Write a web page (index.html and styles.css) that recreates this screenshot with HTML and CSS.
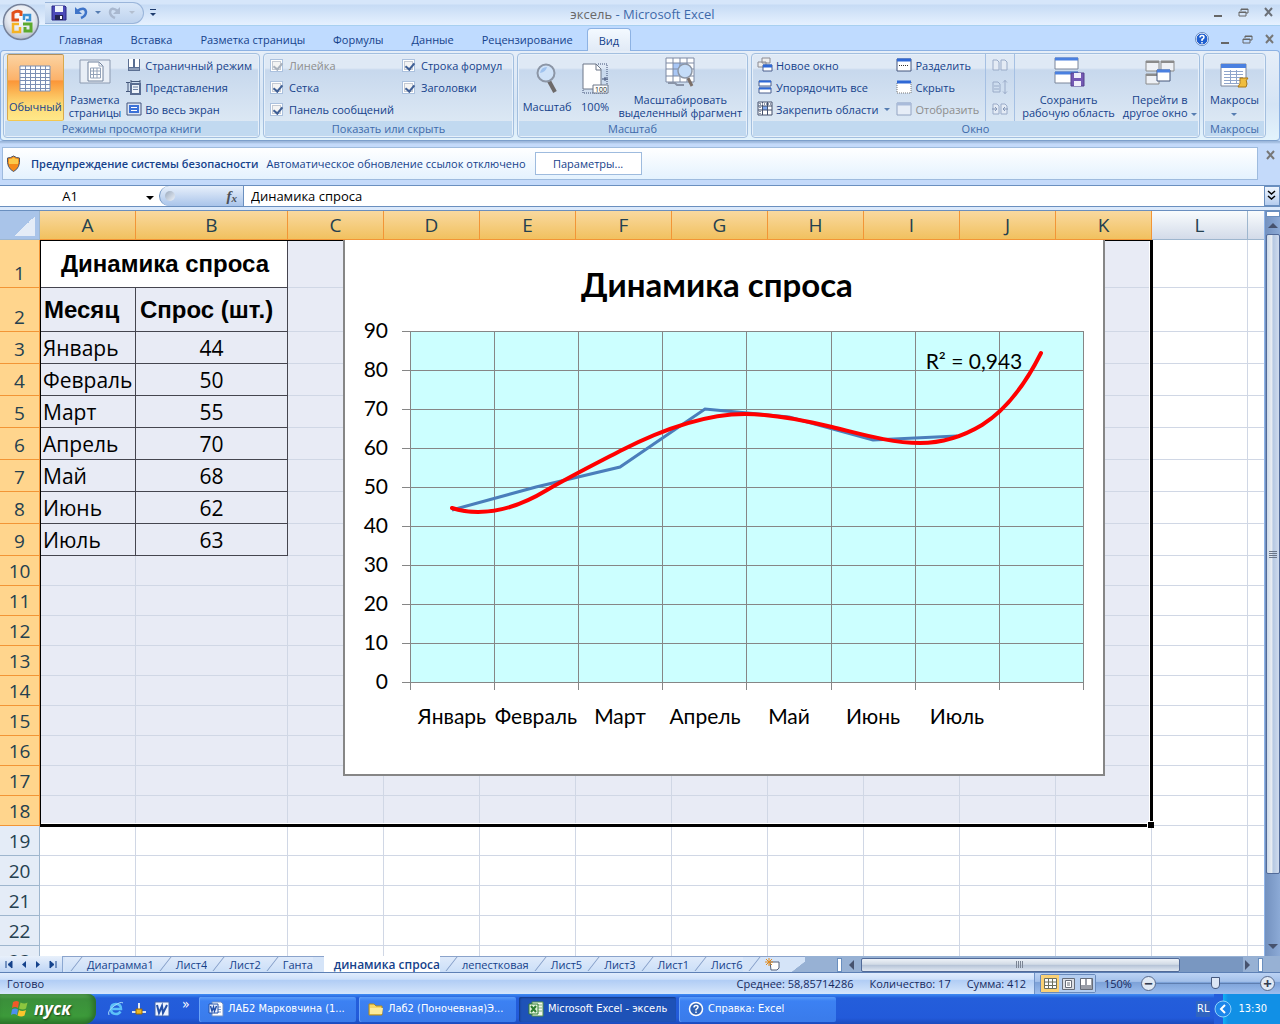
FILE: index.html
```html
<!DOCTYPE html>
<html lang="ru">
<head>
  <meta charset="UTF-8">
  <meta name="viewport" content="width=device-width, initial-scale=1.0">
  <title>эксель - Microsoft Excel</title>
  <link rel="stylesheet" href="styles.css">
</head>
<body>
  <!--title bar-->
  <header class="titlebar">
    <button class="office" aria-label="Office">
      <svg width="38" height="38" viewBox="0 0 38 38">
        <defs>
          <radialGradient id="orb" cx="50%" cy="35%" r="65%"><stop offset="0" stop-color="#fff"/><stop offset=".6" stop-color="#e4e8f0"/><stop offset="1" stop-color="#b4bccb"/></radialGradient>
        </defs>
        <circle cx="19" cy="19" r="17.5" fill="url(#orb)" stroke="#76829b" stroke-width="1.5"/>
        <g fill="none" stroke-width="3">
          <path d="M17 17h-6v-7q4-3 8-1v4" stroke="#e2501a"/>
          <path d="M22 17v-5h6v5h-4" stroke="#3b93d6" stroke-width="2.5"/>
          <path d="M17 21h-6v8h7v-5" stroke="#f5b324" stroke-width="2.5"/>
          <path d="M21 21h8v7h-6v-4" stroke="#5caa2d"/>
        </g>
      </svg>
    </button>
    <div class="quick">
      <button aria-label="Сохранить"><svg width="16" height="16" viewBox="0 0 16 16"><path d="M1 1h13l1 1v13H1z" fill="#4b49b8" stroke="#2d2a86"/><path d="M4 1h8v6H4z" fill="#eef3fb"/><path d="M4 10h8v5H4z" fill="#23234f"/><path d="M9 11h2v3H9z" fill="#fff"/></svg></button>
      <button aria-label="Отменить"><svg width="16" height="16" viewBox="0 0 16 16"><path d="M4 6q8-5 9 1 0 4-5 6" fill="none" stroke="#3f74c8" stroke-width="2.5"/><path d="M2 2v7h7z" fill="#3f74c8"/></svg></button>
      <i class="arrow"></i>
      <button aria-label="Вернуть"><svg width="16" height="16" viewBox="0 0 16 16"><path d="M11 6Q4 1 3 7q0 4 5 6" fill="none" stroke="#a9b8cf" stroke-width="2.5"/><path d="M13 2v7H6z" fill="#a9b8cf"/></svg></button>
      <i class="arrow off"></i>
    </div>
    <button class="quick-more" aria-label="Настройка панели"><i class="arrow dark"></i></button>
    <h1><span>эксель</span> - Microsoft Excel</h1>
    <div class="win">
      <button aria-label="Свернуть"><svg width="11" height="11"><path d="M1 9h8" stroke="#666" stroke-width="2"/></svg></button>
      <button aria-label="Восстановить"><svg width="11" height="11"><path d="M3 4V2h7v4H8M1 5h7v4H1zM1 5.5h7M3 2.5h7" fill="none" stroke="#666"/></svg></button>
      <button aria-label="Закрыть"><svg width="11" height="11"><path d="M2 1l7 8M9 1L2 9" stroke="#6b7078" stroke-width="2"/></svg></button>
    </div>
  </header>

  <!--ribbon tabs-->
  <nav class="tabs">
    <button>Главная</button>
    <button>Вставка</button>
    <button>Разметка страницы</button>
    <button>Формулы</button>
    <button>Данные</button>
    <button>Рецензирование</button>
    <button class="current">Вид</button>
    <div class="win">
      <button aria-label="Справка"><svg width="14" height="14" viewBox="0 0 14 14"><circle cx="7" cy="7" r="6" fill="#1f5fd0" stroke="#fff"/><circle cx="7" cy="7" r="6.6" fill="none" stroke="#5a7eb5" stroke-width=".8"/><path d="M5 5.5q0-2 2-2t2 1.700q0 1-2 2.300V9M7 10v1.500" fill="none" stroke="#fff" stroke-width="1.500"/></svg></button>
      <button aria-label="Свернуть книгу"><svg width="11" height="11"><path d="M1 9h8" stroke="#666" stroke-width="2"/></svg></button>
      <button aria-label="Восстановить книгу"><svg width="11" height="11"><path d="M3 4V2h7v4H8M1 5h7v4H1zM1 5.5h7M3 2.5h7" fill="none" stroke="#666"/></svg></button>
      <button aria-label="Закрыть книгу"><svg width="11" height="11"><path d="M2 1l7 8M9 1L2 9" stroke="#777" stroke-width="2"/></svg></button>
    </div>
  </nav>

  <!--ribbon-->
  <div class="ribbon">
    <section class="group views">
      <div class="tools">
        <button class="big pressed">
          <svg width="32" height="32" viewBox="0 0 32 32"><path d="M1 3h30v25H1z" fill="#fff"/><path d="M1 3h30v25H1zM6.500 3v25M11.500 3v25M16.500 3v25M21.500 3v25M26.500 3v25M1 6.500h30M1 10.500h30M1 14.500h30M1 17.500h30M1 21.500h30M1 25.500h30" fill="none" stroke="#7b8fb4"/></svg>
          Обычный</button>
        <button class="big">
          <svg width="32" height="32" viewBox="0 0 32 32"><path d="M1 4h30v23H1z" fill="#e8eef6" stroke="#8b99b0"/><path d="M9 6h11l4 4v15H9z" fill="#fff" stroke="#71829d"/><path d="M11.500 12h10v10h-10zM11.500 15h10M11.500 18.500h10M14.500 12v10M18 12v10M20 6v4h4" fill="none" stroke="#93a2b8"/></svg>
          Разметка<br>страницы</button>
        <div class="stack">
          <button><svg width="16" height="16" viewBox="0 0 16 16"><path d="M2 2h12v12H2z" fill="#5b6f92"/><path d="M3 2h4v8H3zM9 2h4v8H9z" fill="#fff"/><path d="M3 12h10" stroke="#c6d0e0"/></svg>Страничный режим</button>
          <button><svg width="16" height="16" viewBox="0 0 16 16"><path d="M2 3v10M0 3.500h4M0 12.500h4M5 1v3M14 1v3M5 2.500h9" stroke="#44577a" fill="none"/><path d="M5 5h9v10H5z" fill="#eef3fa" stroke="#5a6d92" stroke-width="2"/><path d="M7 8h5M7 10.500h5" stroke="#6d80a4"/></svg>Представления</button>
          <button><svg width="16" height="16" viewBox="0 0 16 16"><path d="M1 2h14v12H1z" fill="#dfe8f6" stroke="#43557c"/><path d="M3 4h10v8H3z" fill="#3c72d8"/><path d="M5 6.500h6M5 9.500h6" stroke="#fff"/></svg>Во весь экран</button>
        </div>
      </div>
      <h2>Режимы просмотра книги</h2>
    </section>

    <section class="group show">
      <div class="tools checks">
        <label class="off"><input type="checkbox" checked disabled>Линейка</label>
        <label><input type="checkbox" checked>Строка формул</label>
        <label><input type="checkbox" checked>Сетка</label>
        <label><input type="checkbox" checked>Заголовки</label>
        <label><input type="checkbox" checked>Панель сообщений</label>
      </div>
      <h2>Показать или скрыть</h2>
    </section>

    <section class="group zoom">
      <div class="tools">
        <button class="big">
          <svg width="32" height="32" viewBox="0 0 32 32"><path d="M18 18l6 11" stroke="#6d6a6a" stroke-width="4"/><circle cx="15" cy="10" r="8.500" fill="#cfe2f8" stroke="#8c96a6" stroke-width="2"/><path d="M9 10q1-6 7-6-1 5-7 6z" fill="#9fc2ee"/></svg>
          Масштаб</button>
        <button class="big">
          <svg width="32" height="32" viewBox="0 0 32 32"><path d="M4 1h13l5 5v20H4z" fill="#fff" stroke="#6c7788"/><path d="M17 1v6h5" fill="none" stroke="#6c7788"/><path d="M19 1h9v29H4v-3" fill="none" stroke="#3e4f74" stroke-dasharray="1 1"/><path d="M23 16h6M26 14v4" stroke="#3e4f74"/><path d="M14 22h15v8H14z" fill="#fff" stroke="#6c7788"/><text x="16" y="29" font-size="7" fill="#222">100</text></svg>
          100%</button>
        <button class="big">
          <svg width="32" height="32" viewBox="0 0 32 32"><path d="M2 2h28v24H2z" fill="#fff"/><path d="M9 7h14v13H9z" fill="#a9c7f5"/><path d="M2 2h28v24H2zM9 2v24M16 2v24M23 2v24M2 7h28M2 13h28M2 20h28" fill="none" stroke="#7d89a3"/><path d="M4 27h7l2 2h7" fill="none" stroke="#8a94a8" stroke-width="2"/><path d="M24 22l4 8" stroke="#7c6f68" stroke-width="3"/><circle cx="21" cy="15" r="7" fill="#c4dcf8" stroke="#8c96a6" stroke-width="1.500"/></svg>
          Масштабировать<br>выделенный фрагмент</button>
      </div>
      <h2>Масштаб</h2>
    </section>

    <section class="group window">
      <div class="tools">
        <div class="stack">
          <button><svg width="16" height="16" viewBox="0 0 16 16"><path d="M5 1h8v5H5zM1 5h8v5H1z" fill="#eee" stroke="#8a8a92"/><path d="M6 8h9v6H6z" fill="#fff" stroke="#4a5f8d"/><path d="M6 9h9" stroke="#2f68d6" stroke-width="3"/></svg>Новое окно</button>
          <button><svg width="16" height="16" viewBox="0 0 16 16"><path d="M2 2h12v5H2zM2 9h12v5H2z" fill="#fff" stroke="#4a5f8d"/><path d="M2 2.500h12M2 9.500h12" stroke="#2f68d6" stroke-width="2"/></svg>Упорядочить все</button>
          <button><svg width="16" height="16" viewBox="0 0 16 16"><path d="M1 1h14v13H1z" fill="#fff"/><path d="M6 5h5v4H6z" fill="#7fa8ee"/><path d="M1 1h14v13H1zM1 5h14M5.500 1v13M10.500 1v13M1 9h14" fill="none" stroke="#44516d"/><path d="M3 2v12M1 3h13" stroke="#8d97ab" stroke-dasharray="1 1" stroke-width="2"/></svg>Закрепить области<i class="arrow"></i></button>
        </div>
        <div class="stack">
          <button><svg width="16" height="16" viewBox="0 0 16 16"><path d="M1 2h14v12H1z" fill="#fff" stroke="#43557c"/><path d="M1 3h14" stroke="#2f68d6" stroke-width="3"/><path d="M3 8.500h10" stroke="#333" stroke-dasharray="1 1"/></svg>Разделить</button>
          <button><svg width="16" height="16" viewBox="0 0 16 16"><path d="M1 3h14v11H1z" fill="#fff" stroke="#777" stroke-dasharray="1 1"/><path d="M1 3h14" stroke="#2f68d6" stroke-width="3"/></svg>Скрыть</button>
          <button disabled><svg width="16" height="16" viewBox="0 0 16 16"><path d="M1 2h14v12H1z" fill="#e6edf7" stroke="#93a4c2"/><path d="M1 3h14" stroke="#a9bbda" stroke-width="3"/></svg>Отобразить</button>
        </div>
        <div class="stack pair">
          <button disabled aria-label="Рядом"><svg width="18" height="16" viewBox="0 0 18 16"><path d="M2 3h4l2 2v8H2zM10 3h4l2 2v8h-6z" fill="#e4ebf5" stroke="#9aabc8"/></svg></button>
          <button disabled aria-label="Синхронная прокрутка"><svg width="18" height="16" viewBox="0 0 18 16"><path d="M2 3h5l2 2v8H2zM3 7h5M3 10h5M14 1v14M12 3.500l2-2 2 2M12 12.500l2 2 2-2" fill="none" stroke="#9aabc8"/></svg></button>
          <button disabled aria-label="Восстановить расположение"><svg width="18" height="16" viewBox="0 0 18 16"><path d="M2 3h4l2 2v8H2zM10 3h4l2 2v8h-6z" fill="#e4ebf5" stroke="#9aabc8"/><path d="M1 8h5M4 6l2 2-2 2M17 8h-5M14 6l-2 2 2 2" fill="none" stroke="#8496b6"/></svg></button>
        </div>
        <button class="big">
          <svg width="32" height="32" viewBox="0 0 32 32"><path d="M2 2h23v11H2zM2 16h23v11H2z" fill="#fff" stroke="#7b859a"/><path d="M2 3h23M2 17h23" stroke="#4a80e0" stroke-width="3"/><path d="M18 17h13v13H18z" fill="#7459b4" stroke="#54408c"/><path d="M21 17h7v5h-7zM21 25h7v5h-7z" fill="#f0eefa"/></svg>
          Сохранить<br>рабочую область</button>
        <button class="big">
          <svg width="32" height="32" viewBox="0 0 32 32"><path d="M2 5h13v10H2zM17 5h13v10H17zM2 18h13v10H2z" fill="#eef1f6" stroke="#8b8b8b"/><path d="M2 6h13M17 6h13M2 19h13" stroke="#8b8b8b" stroke-width="2"/><path d="M13 14h13v11H13z" fill="#fff" stroke="#44577a"/><path d="M13 15h13" stroke="#4a80e0" stroke-width="3"/></svg>
          Перейти в<br>другое окно<i class="arrow"></i></button>
      </div>
      <h2>Окно</h2>
    </section>

    <section class="group macros">
      <div class="tools">
        <button class="big">
          <svg width="32" height="32" viewBox="0 0 32 32"><path d="M3 8h25v22H3z" fill="#fff" stroke="#7b859a"/><path d="M3 10h25" stroke="#4a80e0" stroke-width="4"/><path d="M6 15.500h19M6 18.500h19M6 21.500h19M6 24.500h19M6 27.500h15M12.500 14v14M18.500 14v14" stroke="#8fa5cb"/><path d="M22 22h8q-3 2-1 6l-1 3h-8q3-3 2-9z" fill="#efbd3e" stroke="#a97714"/></svg>
          Макросы<br><i class="arrow"></i></button>
      </div>
      <h2>Макросы</h2>
    </section>
  </div>

  <!--security warning-->
  <div class="warning">
    <div class="warning-box">
      <svg width="15" height="18" viewBox="0 0 15 18"><path d="M7.500 1q3 2 6 2 1 10-6 13.500Q.5 13 1.500 3q3 0 6-2z" fill="#f58a1a" stroke="#4c5566"/><path d="M7.500 2.500q3 2 4.500 1.500v5H3V4q2 .5 4.500-1.500z" fill="#fbc94a"/></svg>
      <strong>Предупреждение системы безопасности</strong>
      <span>Автоматическое обновление ссылок отключено</span>
      <button>Параметры...</button>
    </div>
    <button class="close" aria-label="Закрыть"><svg width="11" height="11"><path d="M2 1l7 8M9 1L2 9" stroke="#777" stroke-width="2"/></svg></button>
  </div>

  <!--formula bar-->
  <div class="formula">
    <input class="name" value="A1" aria-label="Имя">
    <button class="name-list" aria-label="Список имён"><i class="arrow black"></i></button>
    <div class="fx"><i class="knob"></i><button aria-label="Вставить функцию"><em>f<sub>x</sub></em></button></div>
    <input class="value" value="Динамика спроса" aria-label="Строка формул">
    <button class="expand" aria-label="Развернуть"><svg width="9" height="12" viewBox="0 0 9 12"><path d="M1 1l3.500 3L8 1M1 6l3.500 3L8 6" fill="none" stroke="#000" stroke-width="1.500"/></svg></button>
  </div>

  <!--sheet-->
  <main class="sheet">
    <div class="cells">
      <table>
        <colgroup><col class="c-head"><col class="c-std"><col class="c-wide"><col class="c-std"><col class="c-std"><col class="c-std"><col class="c-std"><col class="c-std"><col class="c-std"><col class="c-std"><col class="c-std"><col class="c-std"><col class="c-std"><col class="c-std"></colgroup>
        <thead>
          <tr><th class="corner"></th><th>A</th><th>B</th><th>C</th><th>D</th><th>E</th><th>F</th><th>G</th><th>H</th><th>I</th><th>J</th><th>K</th><th class="plain">L</th><th class="plain"></th></tr>
        </thead>
        <tbody>
          <tr class="r-title"><th>1</th><td class="box active-cell" colspan="2">Динамика спроса</td></tr>
          <tr class="r-names"><th>2</th><td class="box">Месяц</td><td class="box">Спрос (шт.)</td></tr>
          <tr class="r-data"><th>3</th><td class="box">Январь</td><td class="box num">44</td></tr>
          <tr class="r-data"><th>4</th><td class="box">Февраль</td><td class="box num">50</td></tr>
          <tr class="r-data"><th>5</th><td class="box">Март</td><td class="box num">55</td></tr>
          <tr class="r-data"><th>6</th><td class="box">Апрель</td><td class="box num">70</td></tr>
          <tr class="r-data"><th>7</th><td class="box">Май</td><td class="box num">68</td></tr>
          <tr class="r-data"><th>8</th><td class="box">Июнь</td><td class="box num">62</td></tr>
          <tr class="r-data"><th>9</th><td class="box">Июль</td><td class="box num">63</td></tr>
        </tbody>
      </table>
      <div class="selection"></div>

      <!--chart-->
      <svg class="chart" width="762" height="536" viewBox="0 0 762 536">
        <path d="M0 0h762v536H0z" fill="#fff"/>
        <path d="M1 0v535h760V0" fill="none" stroke="#868686" stroke-width="2"/>
        <path d="M67 91h673v351H67z" fill="#ccffff"/>
        <path class="grid" d="M59 91.500h682M59 130.500h682M59 169.500h682M59 208.500h682M59 247.500h682M59 286.500h682M59 325.500h682M59 364.500h682M59 403.500h682M59 442.500h682"/>
        <path class="grid" d="M67.500 91v359M151.500 91v359M235.500 91v359M319.500 91v359M403.500 91v359M488.500 91v359M572.500 91v359M656.500 91v359M740.500 91v359"/>
        <polyline points="109,270 193,247 277,227 362,169 446,177 530,200 614,196" fill="none" stroke="#4a7ebb" stroke-width="3"/>
        <path d="M109 268C118 271 126 272 135 272C158 272 181 264 204 250C228 236 252 224 277 211C318 190 360 174 402 174C431 174 460 180 489 187C518 194 548 203 577 203C598 203 619 197 639 185C663 170 682 145 698 113" fill="none" stroke="#f00" stroke-width="4" stroke-linecap="round"/>
        <text class="chart-title" x="374" y="57">Динамика спроса</text>
        <g class="y-axis">
          <text x="45" y="98">90</text><text x="45" y="137">80</text><text x="45" y="176">70</text><text x="45" y="215">60</text><text x="45" y="254">50</text>
          <text x="45" y="293">40</text><text x="45" y="332">30</text><text x="45" y="371">20</text><text x="45" y="410">10</text><text x="45" y="449">0</text>
        </g>
        <g class="x-axis">
          <text x="109" y="484">Январь</text><text x="193" y="484">Февраль</text><text x="277" y="484">Март</text><text x="362" y="484">Апрель</text>
          <text x="446" y="484">Май</text><text x="530" y="484">Июнь</text><text x="614" y="484">Июль</text>
          <text x="631" y="129">R² = 0,943</text>
        </g>
      </svg>
    </div>
    <div class="vscroll">
      <i class="split"></i>
      <button class="up" aria-label="Вверх"></button>
      <div class="thumb"></div>
      <button class="down" aria-label="Вниз"></button>
    </div>
  </main>

  <!--sheet tabs-->
  <div class="bottom">
    <div class="nav">
      <button aria-label="Первый лист"><svg width="8" height="9"><path d="M1 1v7M7 1v7L3 4.500z" stroke="#15428b" fill="#15428b"/></svg></button>
      <button aria-label="Назад"><svg width="8" height="9"><path d="M6 1v7L2 4.500z" fill="#15428b"/></svg></button>
      <button aria-label="Вперёд"><svg width="8" height="9"><path d="M2 1v7L6 4.500z" fill="#15428b"/></svg></button>
      <button aria-label="Последний лист"><svg width="8" height="9"><path d="M7 1v7M1 1v7l4-3.500z" stroke="#15428b" fill="#15428b"/></svg></button>
    </div>
    <div class="sheets">
      <button>Диаграмма1</button>
      <button>Лист4</button>
      <button>Лист2</button>
      <button>Ганта</button>
      <button class="current">динамика спроса</button>
      <button>лепестковая</button>
      <button>Лист5</button>
      <button>Лист3</button>
      <button>Лист1</button>
      <button>Лист6</button>
      <button class="add" aria-label="Вставить лист"><svg width="16" height="13" viewBox="0 0 16 13"><path d="M5 4h9v6l-2 2H6z" fill="#fff" stroke="#55617a"/><path d="M4 0v8M0 4h8M1 1l6 6M7 1L1 7" stroke="#e08a1c"/></svg></button>
    </div>
    <div class="hscroll">
      <i class="split"></i>
      <button class="left" aria-label="Влево"></button>
      <div class="thumb"></div>
      <span class="track"></span>
      <button class="right" aria-label="Вправо"></button>
      <i class="split"></i>
    </div>
  </div>

  <!--status bar-->
  <footer class="status">
    <span class="ready">Готово</span>
    <span>Среднее: 58,85714286</span>
    <span>Количество: 17</span>
    <span>Сумма: 412</span>
    <div class="zoombar">
      <div class="modes">
        <button class="on" aria-label="Обычный"><svg width="13" height="11"><path d="M.5.5h12v10H.5z" fill="#fff"/><path d="M.5.5h12v10H.5zM4.500 0v11M8.500 0v11M0 4h13M0 7.500h13" fill="none" stroke="#6d6f5c"/></svg></button>
        <button aria-label="Разметка страницы"><svg width="13" height="12"><path d="M.5.5h12v11H.5z" fill="#dcdfe5" stroke="#666c78"/><path d="M3.500 2.500h6v7h-6zM5 5h3M5 7h3" fill="#fff" stroke="#666c78"/></svg></button>
        <button aria-label="Страничный режим"><svg width="13" height="12"><path d="M.5.5h12v11H.5z" fill="#9a9ea8" stroke="#666c78"/><path d="M1 1h4v6H1zM7 1h4v6H7z" fill="#fff"/></svg></button>
      </div>
      <span>150%</span>
      <button class="round" aria-label="Уменьшить">−</button>
      <input type="range" min="0" max="100" value="58" aria-label="Масштаб">
      <button class="round" aria-label="Увеличить">+</button>
    </div>
  </footer>

  <!--taskbar-->
  <div class="taskbar">
    <button class="start"><svg width="20" height="18" viewBox="0 0 20 18"><path d="M3 2q4-2 6 0L8 8Q5 6 2 8z" fill="#f0592a"/><path d="M10.500 2.500q4 2 7 0l-1.500 6q-3 2-7 0z" fill="#8cc63f"/><path d="M2 9.500q3-2 6 0L7 15q-3-2-6 0z" fill="#4d8ff0"/><path d="M9 10q3 2 7 0l-1.500 5.500q-3 2-7 0z" fill="#fbc52c"/></svg>пуск</button>
    <div class="launch">
      <button aria-label="Internet Explorer"><svg width="16" height="16" viewBox="0 0 16 16"><path d="M4 8h9q0-5-5-5T3 8t5 5q3 0 4.500-2.500" fill="none" stroke="#5cc0f8" stroke-width="2.500"/><path d="M1 14Q-1 10 6 5t9-3" fill="none" stroke="#a5dcfb"/></svg></button>
      <button aria-label="Сеть"><svg width="16" height="16" viewBox="0 0 16 16"><path d="M7 2h2v7H7z" fill="#dfe8f5"/><path d="M1 11h14" stroke="#dbe3ee" stroke-width="2"/><path d="M5 8h6v5H5z" fill="#f0b823" stroke="#94680b"/></svg></button>
      <button aria-label="Word"><svg width="16" height="16" viewBox="0 0 16 16"><path d="M1 1h14v14H1z" fill="#eef4ff" stroke="#3a62b0"/><path d="M3 4l2 8 3-7 1 7 4-8" fill="none" stroke="#2350a8" stroke-width="2"/></svg></button>
    </div>
    <span class="more">»</span>
    <div class="tasks">
      <button><svg width="16" height="16" viewBox="0 0 16 16"><path d="M4 1h9l2 2v12H4z" fill="#fff" stroke="#6f8fc4"/><path d="M8 6h5M9 8.500h4M8 11h5" stroke="#7d99cc"/><path d="M1 3h9v9H1z" fill="#e9f0ff" stroke="#2350a8"/><path d="M2.500 5l1.500 5 1.500-4 1 4L8.500 5" fill="none" stroke="#2350a8" stroke-width="1.500"/></svg>ЛАБ2 Марковчина (1...</button>
      <button><svg width="16" height="16" viewBox="0 0 16 16"><path d="M1 3h5l2 2h6v9H1z" fill="#f8d767" stroke="#b18a1c"/><path d="M2 7h13l-1 6H2z" fill="#fdeb9b"/></svg>Лаб2 (Поночевная)Э...</button>
      <button class="on"><svg width="16" height="16" viewBox="0 0 16 16"><path d="M4 1h11v14H4z" fill="#eff7ec" stroke="#4e8f4a"/><path d="M10 4h4M10 7h4M10 10h4" stroke="#83b67b"/><path d="M1 3h9v10H1z" fill="#e3f3dc" stroke="#2e7d32"/><path d="M3 5l5 6M8 5l-5 6" stroke="#2e7d32" stroke-width="2"/></svg>Microsoft Excel - эксель</button>
      <button><svg width="16" height="16" viewBox="0 0 16 16"><circle cx="8" cy="8" r="6.500" fill="#2f62b5" stroke="#fff" stroke-width="1.500"/><path d="M6 6.500q0-2 2-2t2 1.500q0 1-2 2.500V9.500M8 10.500V12" fill="none" stroke="#fff" stroke-width="1.500"/></svg>Справка: Excel</button>
    </div>
    <span class="lang">RL</span>
    <div class="tray">
      <button aria-label="Показать значки"><svg width="18" height="18" viewBox="0 0 18 18"><circle cx="9" cy="9" r="8" fill="#1d86ea" stroke="#8fd0fb"/><path d="M11 5L7 9l4 4" fill="none" stroke="#fff" stroke-width="2"/></svg></button>
      <time>13:30</time>
    </div>
  </div>

  <script>
    const tbody = document.querySelector(".sheet tbody");
    const lastRow = 23; //last row that is visible
    const cols = 13;
    const selectedRows = 18;
    const selectedCols = 11;

    //add the empty rows
    for(let i = tbody.rows.length + 1; i <= lastRow; i++){
      const row = tbody.insertRow();
      const head = document.createElement("th");
      head.textContent = i;
      row.append(head);
    }

    //fill every row with empty cells and mark the selected ones
    [...tbody.rows].forEach((row, r) => {
      const inRow = r < selectedRows;
      if(!inRow) row.cells[0].classList.add("plain");
      let used = 0;
      [...row.cells].slice(1).forEach(cell => {
        used += cell.colSpan;
        cell.classList.add("selected");
      });
      for(; used < cols; used++){
        const cell = row.insertCell();
        if(inRow && used < selectedCols) cell.classList.add("selected");
      }
    });
  </script>
</body>
</html>
```
FILE: styles.css
```css
*{box-sizing:border-box;}
body{
  margin:0;
  height:100vh;
  display:flex;
  flex-direction:column;
  overflow:hidden;
  background:#bfdbff;
  color:#15428b;
  font:11px/13px "Open Sans","Noto Sans",sans-serif;
}
button{
  font:inherit;
  color:inherit;
  background:none;
  border:0;
  padding:0;
  margin:0;
  white-space:nowrap;
}
svg{display:block; flex:none;}
h1,h2{margin:0; font-weight:normal;}

/*small drop-down arrow*/
.arrow{
  display:inline-block;
  border:3px solid transparent;
  border-top-color:#567db1;
  border-bottom:0;
  vertical-align:middle;
}
.arrow.off{border-top-color:#b3bfd0;}
.arrow.dark{border-top-color:#1e3c6e;}
.arrow.black{border-top-color:#000; border-width:4px 4px 0;}

/*title bar*/
.titlebar{
  flex:none;
  display:flex;
  align-items:center;
  position:relative;
  height:26px;
  padding:0 6px 0 2px;
  background:linear-gradient(#d6e6fa 0 4px,#c6dbf5 5px,#e6f1ff 25px);
  border-bottom:1px solid #a8d0f0;
}
.office{align-self:flex-start; width:38px; z-index:2; margin-top:3px;}
.quick{
  display:flex;
  align-items:center;
  gap:6px;
  height:22px;
  margin-left:5px;
  padding:0 8px 0 6px;
  background:linear-gradient(#d9e7f8,#bed3ee);
  border:1px solid #9ab5da;
  border-left:0;
  border-radius:0 11px 11px 0;
}
.quick-more{
  margin-left:6px;
  border-top:1px solid #1e3c6e;
  line-height:6px;
}
.titlebar h1{
  flex:1;
  text-align:center;
  padding:3px 84px 0 0;
  font-size:13px;
  line-height:20px;
  color:#3e6aaa;
}
.titlebar h1 span{color:#696969;}
.win{display:flex; align-items:center; gap:14px;}

/*ribbon tabs*/
.tabs{
  flex:none;
  display:flex;
  height:24px;
  padding:2px 5px 0 45px;
  background:#bfdbff;
}
.tabs > button{padding:0 14px;}
.tabs > .current{
  padding:0 11px;
  border:1px solid #8db2e3;
  border-bottom:0;
  border-radius:4px 4px 0 0;
  background:linear-gradient(#f3f9ff,#e1eaf6);
  margin-bottom:-1px;
  z-index:1;
}
.tabs .win{margin-left:auto; gap:11px;}

/*ribbon*/
.ribbon{
  flex:none;
  display:flex;
  gap:3px;
  height:91px;
  padding:2px;
  border:1px solid #8db2e3;
  border-bottom-color:#7d9fcb;
  border-radius:4px;
  background:linear-gradient(#e6eef8,#d5e4f5 60%,#e3f3fc);
}
.group{
  display:flex;
  flex-direction:column;
  border:1px solid #a3bfdf;
  border-radius:4px;
  overflow:hidden;
  background:linear-gradient(#dfe9f5 0 14px,#c7d8ed 16px,#dce8f4 68px);
  box-shadow:inset 0 0 0 1px #e7f0fa;
}
.group h2{
  flex:none;
  margin:0 1px 1px;
  text-align:center;
  font-size:11px;
  line-height:15px;
  color:#3e6aaa;
  background:#c1d9f0;
}
.tools{flex:1; min-height:0; display:flex; gap:4px; padding:0 3px;}
.views{width:257px;}
.show{width:251px;}
.zoom{width:231px;}
.window{width:449px;}
.macros{width:63px;}
.big{
  display:block;
  height:67px;
  text-align:center;
  border:1px solid transparent;
  border-radius:2px;
}
.big svg{margin:0 auto 5px;}
.pressed{
  border-color:#b08f5c #d8a94e #f4c84e;
  padding:0 1px;
  background:linear-gradient(#fbd3a2,#fcb26a 38%,#fb9638 40%,#fdd873 75%,#ffe88a);
}
.stack{display:flex; flex-direction:column;}
.stack button{
  display:flex;
  align-items:center;
  gap:3px;
  height:22px;
}
button:disabled,.off{color:#8d8d8d;}
.big > .arrow,.stack .arrow{margin-left:3px;}
.macros .big > .arrow{margin:0;}
.macros .tools,.zoom .tools{justify-content:space-around; gap:0; padding:0 1px;}
.window .tools{gap:6px; padding-left:5px;}
.pair{
  padding:0 5px;
  border:solid #a5c0e3;
  border-width:0 1px;
}
.checks{
  display:grid;
  grid-template-columns:132px 1fr;
  grid-auto-rows:22px;
  padding-left:6px;
  gap:0;
}
.checks label{
  display:flex;
  align-items:center;
  gap:6px;
  white-space:nowrap;
}
.checks input{
  appearance:none;
  position:relative;
  width:13px;
  height:13px;
  margin:0;
  border:1px solid #abc1de;
  background:#f4f4f4;
  box-shadow:inset 0 0 0 1px #fff,inset 0 0 0 2px #c5cad3;
}
.checks input::after{
  content:"";
  position:absolute;
  left:4px;
  top:1px;
  width:4px;
  height:7px;
  border:solid #3f5f95;
  border-width:0 2px 2px 0;
  transform:rotate(40deg);
}
.checks .off input::after{border-color:#a9b1bd;}

/*security warning*/
.warning{
  flex:none;
  display:flex;
  align-items:flex-start;
  height:44px;
  padding:6px 4px 0 2px;
  background:linear-gradient(#9db8dc 0 1px,#c4dafa 3px);
}
.warning-box{
  flex:1;
  display:flex;
  align-items:center;
  height:33px;
  padding-left:3px;
  background:linear-gradient(#fff,#e4f2fe);
  border:1px solid #9ebbde;
}
.warning-box strong{margin:0 8px 0 10px; font-weight:600;}
.warning-box button{
  width:107px;
  height:23px;
  margin-left:9px;
  border:1px solid #9ebbde;
  background:#fff;
}
.close{margin:3px 0 0 7px;}

/*formula bar*/
.formula{
  flex:none;
  display:flex;
  height:26px;
  border:solid #6a8fbf;
  border-width:1px 0;
  background:linear-gradient(#fff 0 20px,#6a8fbf 20px 21px,#dbe9fb 21px);
  padding-bottom:4px;
}
.formula input{
  font:13px/20px "Open Sans","Noto Sans",sans-serif;
  color:#000;
  border:0;
  outline:0;
  padding:0;
  background:none;
}
.formula .name{width:140px; text-align:center;}
.name-list{width:19px;}
.fx{
  display:flex;
  justify-content:space-between;
  align-items:center;
  width:85px;
  padding:0 6px 0 5px;
  border:1px solid #6a8fbf;
  border-width:0 1px 0 1px;
  border-radius:10px 0 0 10px;
  background:linear-gradient(#e8f0fb,#a9c4ea);
}
.knob{
  width:10px;
  height:10px;
  border-radius:50%;
  background:linear-gradient(135deg,#9aa9bd,#eef3fa);
}
.fx em{font:italic bold 15px/18px "Liberation Serif",serif; color:#4c5057;}
.fx sub{font-size:11px; line-height:0; vertical-align:-1px;}
.formula .value{flex:1; padding-left:7px;}
.expand{
  width:16px;
  border:1px solid #6a8fbf;
  background:linear-gradient(#eff5fd,#b5cdef);
  padding-left:2px;
}

/*sheet*/
.sheet{
  flex:1;
  min-height:0;
  display:flex;
  background:#fff;
}
.cells{
  flex:1;
  min-width:0;
  position:relative;
  overflow:hidden;
}
table{
  width:1344px;
  table-layout:fixed;
  border-collapse:separate;
  border-spacing:0;
  color:#000;
  font-size:21px;
  line-height:28px;
}
.c-head{width:40px;}
.c-std{width:96px;}
.c-wide{width:152px;}
th,td{
  height:30px;
  padding:0;
  border:solid #d0d7e5;
  border-width:0 1px 1px 0;
  overflow:hidden;
  white-space:nowrap;
}
th{
  font-size:19px;
  line-height:27px;
  font-weight:normal;
  color:#24404f;
  border-color:#f29536;
  background:#ffd58d;
  vertical-align:bottom;
}
thead th{
  height:29px;
  background:linear-gradient(#f9d99f,#f1c15f);
  vertical-align:middle;
}
th.plain{background:#e4ecf7; border-color:#9eb6ce;}
thead .plain{background:linear-gradient(#f9fcfd,#d3dbe9);}
thead .corner{
  border-color:#9eb6ce;
  background:linear-gradient(135deg,transparent 50%,#e4ecf7 50%) 15px 5px/20px 20px no-repeat,#a9c4e9;
}
.selected{background:#e8ebf5;}
td.box{border-color:#45454f; padding-left:3px;}
td.active-cell{background:#fff;}
.r-title td,.r-names td{font:bold 24px/28px "Liberation Sans",Arial,sans-serif;}
.r-title td{height:48px; text-align:center;}
.r-names td{height:44px;}
.r-names .box{padding-left:4px;}
.r-data td{height:32px;}
td.num{text-align:center; padding:0;}
.selection{
  position:absolute;
  left:40px;
  top:29px;
  width:1113px;
  height:587px;
  border:1px solid #000;
  border-width:1px 3px 3px 1px;
  box-shadow:inset -1px -1px 0 #fff;
}
.selection::after{
  content:"";
  position:absolute;
  right:-4px;
  bottom:-4px;
  width:6px;
  height:6px;
  background:#000;
  border:solid #fff;
  border-width:1px 0 0 1px;
}
.chart{
  position:absolute;
  left:343px;
  top:29px;
  font:21px Lato,"Open Sans",sans-serif;
}
.grid{fill:none; stroke:#868686;}
.chart-title{font-size:33px; font-weight:bold; text-anchor:middle;}
.y-axis{text-anchor:end;}
.x-axis{text-anchor:middle;}

/*scrollbars*/
.vscroll{
  flex:none;
  width:16px;
  display:flex;
  flex-direction:column;
  align-items:center;
  border-left:1px solid #8fb4e8;
  background:linear-gradient(90deg,#7391bf,#8caad6);
}
.split{
  flex:none;
  background:#fff;
  border:1px solid #6a8fbf;
}
.vscroll .split{width:14px; height:6px;}
.vscroll button,.hscroll button{
  border:5px solid transparent;
  width:0;
  height:0;
  padding:0;
}
.vscroll .up{border-top:0; border-bottom-color:#46526e; margin:6px 0;}
.vscroll .down{border-bottom:0; border-top-color:#46526e; margin:auto 0 7px;}
.thumb{
  border:1px solid #516a98;
  border-radius:2px;
}
.vscroll .thumb{
  width:14px;
  height:640px;
  background:
    repeating-linear-gradient(#6b7688 0 1px,transparent 1px 2px) 50% 50%/8px 7px no-repeat,
    linear-gradient(90deg,#cdd9e8,#e9eef3 40%,#b5c8e2 50%,#d0dcee);
}

/*sheet tabs*/
.bottom{
  flex:none;
  display:flex;
  height:16px;
  background:#97b1d4;
}
.nav{
  display:flex;
  align-items:center;
  justify-content:space-between;
  width:63px;
  padding:0 5px;
  background:linear-gradient(#e8f0fb,#bed5f5);
  border-right:1px solid #8ba8d2;
}
.sheets{
  display:flex;
  padding-left:2px;
  background:#d5e4f8;
  border-top:1px solid #8ba3cb;
}
.sheets button{
  position:relative;
  padding-left:22px;
  background:linear-gradient(#dfeafa,#cbdff8);
}
.sheets button::before{
  content:"";
  position:absolute;
  left:11px;
  top:0;
  height:14px;
  border-left:1px solid #7f99c4;
  transform:skewX(-38deg);
}
.sheets .current{
  margin:-1px 0 0 11px;
  padding:0 0 0 10px;
  font-size:12px;
  font-weight:600;
  background:#fff;
}
.sheets .current::before{display:none;}
.sheets .add{
  width:62px;
  padding-left:22px;
  background:linear-gradient(142deg,#d5e4f8 83%,#97b1d4 84%);
}
.hscroll{
  flex:1;
  display:flex;
  align-items:center;
  padding:1px 17px 0 32px;
}
.hscroll .split{width:5px; height:14px;}
.hscroll .left{border-left:0; border-right-color:#46526e; margin:0 7px;}
.hscroll .right{border-right:0; border-left-color:#46526e; margin-right:8px;}
.hscroll .thumb{
  flex:320;
  height:14px;
  background:
    repeating-linear-gradient(90deg,#7c8594 0 1px,transparent 1px 2px) 50% 50%/8px 7px no-repeat,
    linear-gradient(#eef2f8,#d2dbe6 45%,#b4c2d6 50%,#dfe7f1);
}
.track{flex:63; align-self:stretch; background:#7997c1; margin-right:2px;}

/*status bar*/
.status{
  flex:none;
  display:flex;
  align-items:center;
  gap:16px;
  height:22px;
  padding-left:7px;
  color:#15295e;
  border-top:1px solid #5d80b5;
  background:linear-gradient(#e1edfd,#cde0fa 30%,#b1cdf5 35%,#d6e6fb);
}
.ready{margin-right:auto;}
.zoombar{
  align-self:stretch;
  display:flex;
  align-items:center;
  width:246px;
  margin-left:-8px;
  padding:0 5px;
  border-left:1px solid #6f92c6;
  background:linear-gradient(#bcd3f4,#a3c0ea 40%,#7da2d8 45%,#9cbdee);
}
.modes{
  display:flex;
  height:19px;
  margin-right:8px;
  border:1px solid #6889bb;
  border-radius:2px;
}
.modes button{display:grid; place-items:center; width:18px; background:#b4cdf0;}
.modes .on{background:#fbd174;}
.zoombar span{width:37px;}
.round{
  flex:none;
  width:15px;
  height:15px;
  border:1px solid #55688c;
  border-radius:50%;
  background:#e1e9f4;
  color:#333c50;
  font-size:15px;
  font-weight:bold;
  line-height:11px;
}
.zoombar input{
  appearance:none;
  flex:1;
  min-width:0;
  height:1px;
  margin:0;
  background:#dfe9f8;
  border-bottom:1px solid #5e7eb0;
}
.zoombar input::-webkit-slider-thumb{
  appearance:none;
  width:9px;
  height:12px;
  background:#dce6f5;
  border:1px solid #45587e;
  border-radius:1px 1px 5px 5px;
}

/*taskbar*/
.taskbar{
  flex:none;
  display:flex;
  align-items:center;
  height:30px;
  color:#fff;
  font:11px/14px "DejaVu Sans Condensed","Open Sans",sans-serif;
  background:linear-gradient(#3f8cf3,#245edb 4px,#225ada 24px,#1b4bbd);
}
.start{
  display:flex;
  align-items:center;
  gap:4px;
  align-self:stretch;
  width:96px;
  padding-left:10px;
  border-radius:0 8px 12px 0;
  background:linear-gradient(#5fac5c,#3b8f3b 5px,#3c9a3a 22px,#2c7a2b);
  box-shadow:inset -3px 0 5px #2a6c29;
  font:italic bold 17px/22px "Open Sans",sans-serif;
  text-shadow:1px 1px 2px #1c401b;
}
.launch{display:flex; gap:7px; margin-left:12px;}
.more{width:29px; padding:0 0 10px 12px; font-size:14px;}
.tasks{display:flex; flex:1; gap:3px;}
.tasks button{
  display:flex;
  align-items:center;
  gap:4px;
  flex:0 1 157px;
  height:25px;
  padding-left:9px;
  border-radius:2px;
  background:linear-gradient(#5a9bf8,#3c81f3 4px,#3a7bea);
  box-shadow:inset 1px 0 #6aa4f8;
}
.tasks .on{background:#1e52b7; box-shadow:inset 1px 1px 2px #143a86;}
.lang{margin-right:4px; padding:1px; background:#3064c0;}
.tray{
  display:flex;
  align-items:center;
  gap:6px;
  align-self:stretch;
  padding-right:13px;
  background:linear-gradient(90deg,#245edb 9px,#0fb4f5 9px,#1190e6 14px);
}
```
